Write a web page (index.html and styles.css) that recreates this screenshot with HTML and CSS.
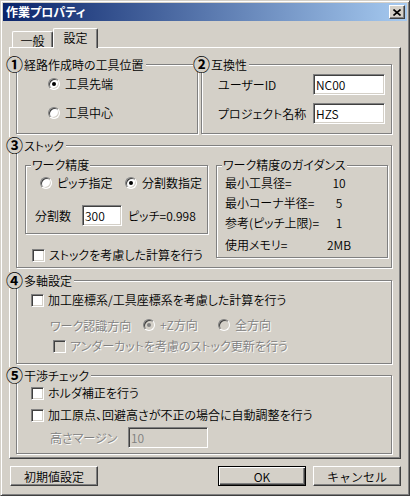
FILE: index.html
```html
<!DOCTYPE html>
<html lang="ja">
<head>
    <meta charset="UTF-8">
    <title>作業プロパティ</title>
    <link rel="stylesheet" href="styles.css">
</head>
<body>
    <div class="window">
        <div class="titlebar">
            <span class="title">作業プロパティ</span>
            <button class="close-btn" aria-label="close">
                <svg width="8" height="7" viewBox="0 0 8 7"><path d="M0.5 0.5 L7.5 6.5 M7.5 0.5 L0.5 6.5" stroke="#000" stroke-width="1.6"/></svg>
            </button>
        </div>

        <div class="client">
            <!-- tabs -->
            <div class="tabs">
                <div class="tab">一般</div>
                <div class="tab tab-active">設定</div>
            </div>

            <div class="panel">
                <div class="row-top">
                    <div class="group group-tool">
                        <div class="legend"><span class="num">①</span>経路作成時の工具位置</div>
                        <div class="opt checked"><span class="dot"></span>工具先端</div>
                        <div class="opt"><span class="dot"></span>工具中心</div>
                    </div>
                    <div class="group group-compat">
                        <div class="legend legend-narrow"><span class="num">②</span>互換性</div>
                        <span>ユーザーID</span>
                        <input class="field field-id" type="text" value="NC00">
                        <span>プロジェクト名称</span>
                        <input class="field field-id" type="text" value="HZS">
                    </div>
                </div>

                <div class="group group-stock">
                    <div class="legend"><span class="num">③</span>ストック</div>
                    <div class="stock-left">
                        <div class="sub sub-work">
                            <div class="sub-legend">ワーク精度</div>
                            <div class="work-radios">
                                <div class="opt opt-pitch"><span class="dot"></span>ピッチ指定</div>
                                <div class="opt checked"><span class="dot"></span>分割数指定</div>
                            </div>
                            <div class="work-split">
                                <span class="split-label">分割数</span>
                                <input class="field field-split" type="text" value="300">
                                <span>ピッチ=0.998</span>
                            </div>
                        </div>
                        <div class="chk chk-stock"><span class="box"></span>ストックを考慮した計算を行う</div>
                    </div>
                    <div class="sub sub-guide">
                        <div class="sub-legend">ワーク精度のガイダンス</div>
                        <div class="guide-row"><span class="guide-label">最小工具径=</span><span class="guide-value">10</span></div>
                        <div class="guide-row"><span class="guide-label">最小コーナ半径=</span><span class="guide-value">5</span></div>
                        <div class="guide-row"><span class="guide-label">参考(ピッチ上限)=</span><span class="guide-value">1</span></div>
                        <div class="guide-row guide-mem"><span class="guide-label">使用メモリ=</span><span class="guide-value">2MB</span></div>
                    </div>
                </div>

                <div class="group group-multi">
                    <div class="legend"><span class="num">④</span>多軸設定</div>
                    <div class="chk"><span class="box"></span>加工座標系/工具座標系を考慮した計算を行う</div>
                    <div class="dir-row disabled">
                        <span class="dir-label">ワーク認識方向</span>
                        <div class="opt opt-z checked"><span class="dot"></span>+Z方向</div>
                        <div class="opt"><span class="dot"></span>全方向</div>
                    </div>
                    <div class="chk chk-under disabled"><span class="box"></span>アンダーカットを考慮のストック更新を行う</div>
                </div>

                <div class="group group-check">
                    <div class="legend"><span class="num">⑤</span>干渉チェック</div>
                    <div class="chk"><span class="box"></span>ホルダ補正を行う</div>
                    <div class="chk chk-auto"><span class="box"></span>加工原点、回避高さが不正の場合に自動調整を行う</div>
                    <div class="margin-row">
                        <span class="margin-label disabled">高さマージン</span>
                        <input class="field field-margin" type="text" value="10" disabled>
                    </div>
                </div>
            </div>

            <div class="actions">
                <button class="btn">初期値設定</button>
                <button class="btn btn-default">OK</button>
                <button class="btn">キャンセル</button>
            </div>
        </div>
    </div>
</body>
</html>
```

FILE: styles.css
```css
* {
    box-sizing: border-box;
}

body {
    margin: 0;
    font-family: "Noto Sans CJK JP", "Noto Sans", sans-serif;
    font-size: 12px;
    font-weight: 350;
    font-feature-settings: "palt";
    color: #000;
    background: #D4D0C8;
}

/* window frame */
.window {
    width: 410px;
    height: 496px;
    display: flex;
    flex-direction: column;
    padding: 2px;
    background: #D4D0C8;
    border: 1px solid;
    border-color: #D4D0C8 #404040 #404040 #D4D0C8;
    box-shadow: inset 1px 1px 0 #fff, inset -1px -1px 0 #808080;
}

.titlebar {
    height: 18px;
    display: flex;
    align-items: center;
    justify-content: space-between;
    padding: 0 2px 0 3px;
    background: linear-gradient(to right, #0A246A, #A6CAF0);
}

.title {
    color: #fff;
    font-weight: bold;
    line-height: 14px;
}

.close-btn {
    width: 16px;
    height: 14px;
    padding: 0;
    display: flex;
    align-items: center;
    justify-content: center;
    background: #D4D0C8;
    border: 1px solid;
    border-color: #fff #404040 #404040 #fff;
    box-shadow: inset -1px -1px 0 #808080;
}

.client {
    flex: 1;
    padding: 7px 6px 0 6px;
}

/* tabs */
.tabs {
    display: flex;
    align-items: flex-end;
    height: 19px;
    padding-left: 3px;
}

.tab {
    width: 41px;
    height: 16px;
    display: flex;
    justify-content: center;
    align-items: center;
    padding-top: 1px;
    border: 1px solid;
    border-color: #fff #404040 transparent #fff;
    border-bottom: none;
    border-radius: 2px 2px 0 0;
    box-shadow: inset -1px 0 0 #808080;
}

.tab-active {
    position: relative;
    z-index: 1;
    width: 45px;
    height: 20px;
    margin-bottom: -1px;
    padding-bottom: 3px;
    background: #D4D0C8;
}

.panel {
    height: 412px;
    padding: 16px 8px 0 6px;
    border: 1px solid;
    border-color: #fff #404040 #404040 #fff;
    box-shadow: inset -1px -1px 0 #808080;
}

/* group boxes */
.group,
.sub {
    position: relative;
    border: 1px solid #808080;
    box-shadow: inset 1px 1px 0 #fff, 1px 1px 0 #fff;
}

.legend {
    position: absolute;
    top: -9px;
    left: -11px;
    height: 16px;
    display: flex;
    align-items: center;
    padding-right: 2px;
    background: #D4D0C8;
    white-space: nowrap;
}

.legend-narrow {
    left: -9px;
}

.num {
    font-size: 17px;
    font-weight: bold;
    line-height: 16px;
    margin-right: 1px;
}

.sub-legend {
    position: absolute;
    top: -8px;
    left: 5px;
    padding: 0 1px;
    line-height: 14px;
    background: #D4D0C8;
    white-space: nowrap;
}

.row-top {
    display: flex;
    gap: 3px;
}

.group-tool {
    width: 182px;
    height: 70px;
    display: flex;
    flex-direction: column;
    gap: 15px;
    padding: 12px 0 0 31px;
}

.group-compat {
    flex: 1;
    height: 70px;
    display: grid;
    grid-template-columns: 95px 72px;
    grid-auto-rows: 21px;
    row-gap: 8px;
    align-items: center;
    align-content: start;
    padding: 9px 0 0 16px;
}

.group-stock {
    height: 123px;
    margin-top: 11px;
    display: flex;
    align-items: flex-start;
    gap: 8px;
    padding: 19px 0 0 8px;
}

.stock-left {
    display: flex;
    flex-direction: column;
}

.sub-work {
    width: 183px;
    height: 69px;
    padding: 10px 0 0 9px;
}

.work-radios {
    display: flex;
    padding-left: 5px;
}

.opt-pitch {
    width: 85px;
}

.work-split {
    display: flex;
    align-items: center;
    margin-top: 15px;
    height: 21px;
}

.split-label {
    width: 47px;
}

.field-split {
    width: 40px;
    margin-right: 6px;
}

.chk-stock {
    margin: 14px 0 0 7px;
}

.sub-guide {
    width: 172px;
    height: 93px;
    display: flex;
    flex-direction: column;
    gap: 6px;
    padding: 10px 0 0 8px;
}

.guide-row {
    display: flex;
    height: 14px;
    line-height: 14px;
}

.guide-mem {
    margin-top: 2px;
}

.guide-label {
    width: 100px;
}

.guide-value {
    width: 28px;
    text-align: center;
}

.group-multi {
    height: 84px;
    margin-top: 12px;
    display: flex;
    flex-direction: column;
    padding: 12px 0 0 14px;
}

.dir-row {
    display: flex;
    align-items: center;
    height: 14px;
    margin: 11px 0 0 19px;
}

.dir-label {
    width: 93px;
}

.opt-z {
    width: 75px;
}

.chk-under {
    margin: 7px 0 0 22px;
}

.group-check {
    height: 79px;
    margin-top: 11px;
    display: flex;
    flex-direction: column;
    padding: 10px 0 0 14px;
}

.chk-auto {
    margin-top: 8px;
}

.margin-row {
    display: flex;
    align-items: center;
    margin: 5px 0 0 19px;
}

.margin-label {
    width: 78px;
}

.field-margin {
    width: 80px;
}

/* controls */
.opt,
.chk {
    display: flex;
    align-items: center;
    gap: 5px;
    height: 14px;
    line-height: 14px;
    white-space: nowrap;
}

.chk {
    gap: 4px;
}

.dot {
    width: 12px;
    height: 12px;
    flex: none;
    display: flex;
    align-items: center;
    justify-content: center;
    border-radius: 50%;
    background: #fff;
    border: 1px solid;
    border-color: #808080 #fff #fff #808080;
    box-shadow: inset 1px 1px 0 #404040, inset -1px -1px 0 #D4D0C8;
}

.checked .dot::after {
    content: "";
    width: 4px;
    height: 4px;
    border-radius: 50%;
    background: #000;
}

.box {
    width: 13px;
    height: 13px;
    flex: none;
    background: #fff;
    border: 1px solid;
    border-color: #808080 #fff #fff #808080;
    box-shadow: inset 1px 1px 0 #404040, inset -1px -1px 0 #D4D0C8;
}

.disabled {
    color: #808080;
    text-shadow: 1px 1px 0 #fff;
}

.disabled .dot,
.disabled .box {
    background: #D4D0C8;
}

.disabled .checked .dot::after {
    background: #808080;
}

.field {
    height: 21px;
    padding: 0 2px;
    font-family: inherit;
    font-size: 12px;
    font-weight: 350;
    color: #000;
    background: #fff;
    border: 1px solid;
    border-color: #808080 #fff #fff #808080;
    box-shadow: inset 1px 1px 0 #404040, inset -1px -1px 0 #D4D0C8;
    outline: none;
}

.field:disabled {
    color: #808080;
    background: #D4D0C8;
}

.field-id {
    width: 72px;
}

/* bottom buttons */
.actions {
    display: flex;
    gap: 7px;
    margin-top: 7px;
    padding-left: 1px;
}

.btn {
    width: 88px;
    height: 20px;
    padding: 0;
    font-family: inherit;
    font-size: 12px;
    font-weight: 350;
    color: #000;
    background: #D4D0C8;
    border: 1px solid;
    border-color: #fff #404040 #404040 #fff;
    box-shadow: inset -1px -1px 0 #808080;
}

.btn-default {
    margin-left: auto;
    border-color: #000;
    box-shadow: inset 1px 1px 0 #fff, inset -1px -1px 0 #404040, inset -2px -2px 0 #808080;
}
```
